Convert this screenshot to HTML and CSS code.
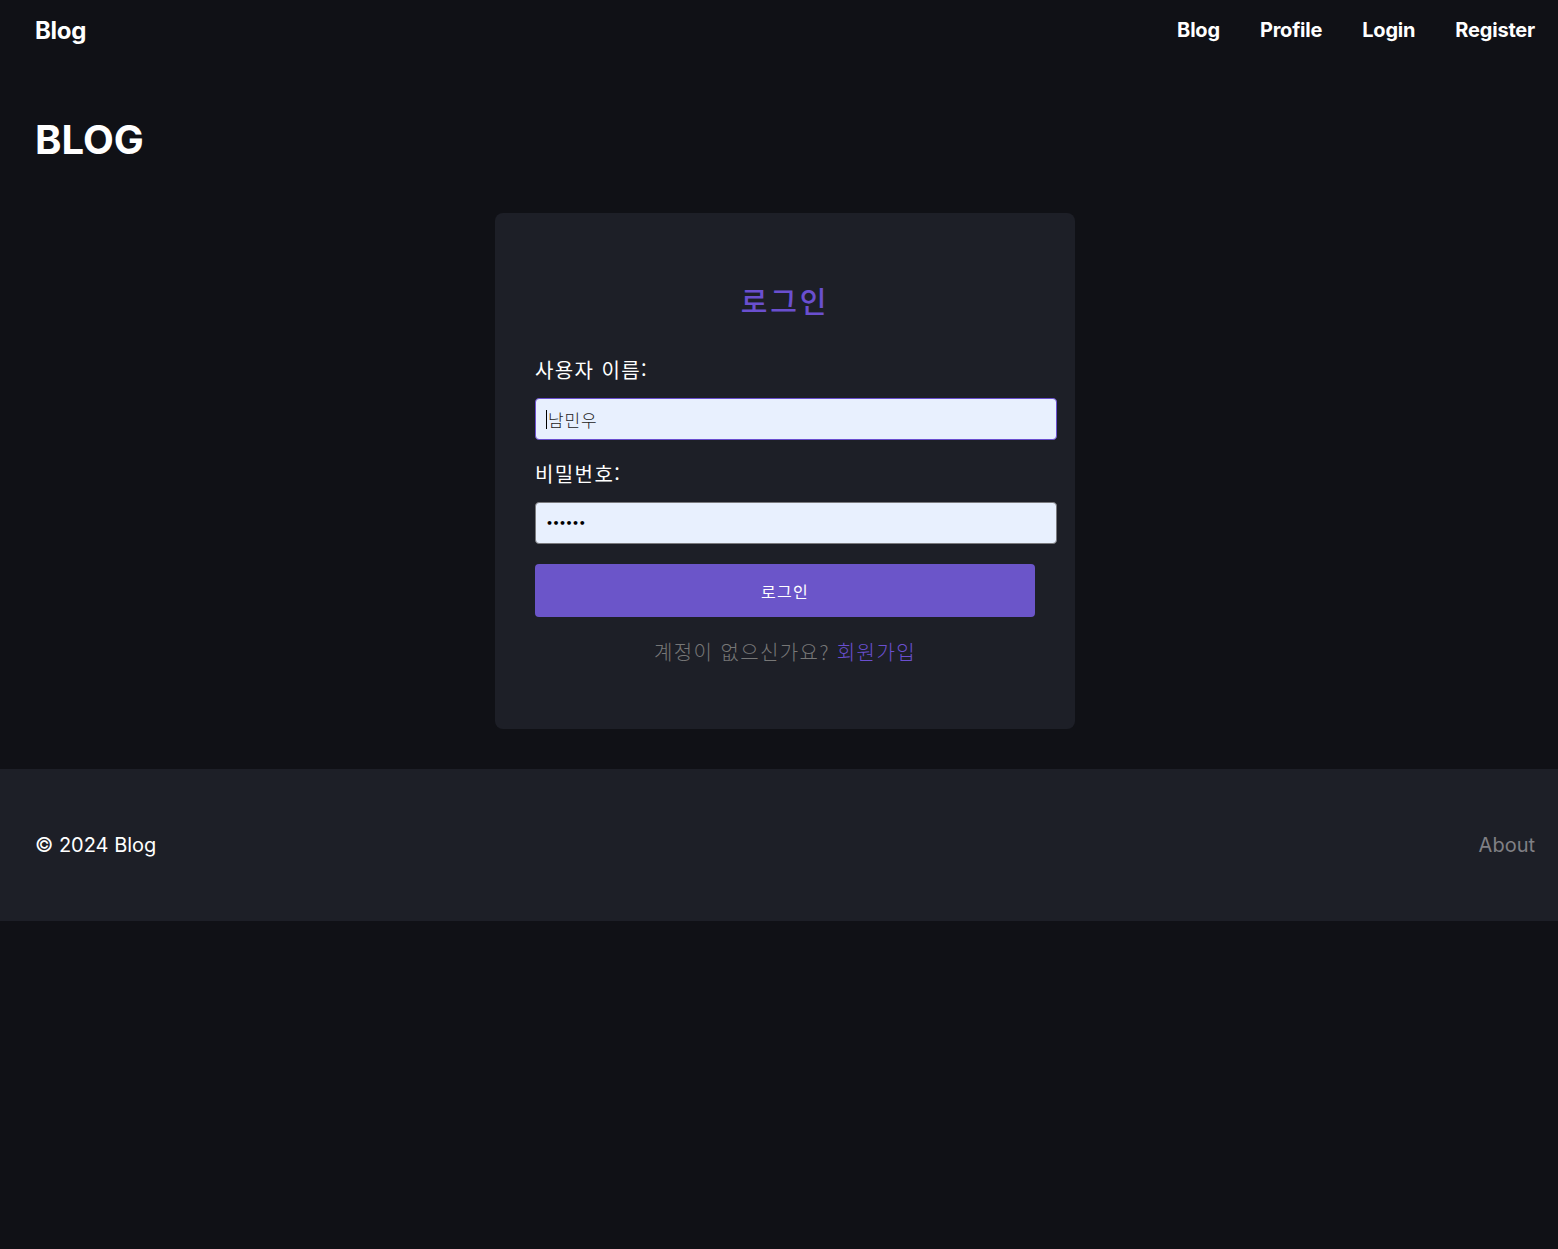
FILE: index.html
```html
<!DOCTYPE html>
<html lang="ko">
<head>
<meta charset="utf-8">
<title>Blog</title>
<link rel="stylesheet" href="styles.css">
</head>
<body>
<header class="topbar">
  <a class="brand" href="#">Blog</a>
  <nav class="nav">
    <a href="#">Blog</a>
    <a href="#">Profile</a>
    <a href="#">Login</a>
    <a href="#">Register</a>
  </nav>
</header>
<main class="main">
  <h1 class="page-title">BLOG</h1>
  <section class="card">
    <h2 class="card-title">로그인</h2>
    <form class="form">
      <label class="label" for="u">사용자 이름:</label>
      <div class="input input-focus" id="u"><span class="caret"></span>남민우</div>
      <label class="label" for="p">비밀번호:</label>
      <div class="input" id="p"><span class="dots">••••••</span></div>
      <div class="btn">로그인</div>
      <p class="signup">계정이 없으신가요? <a href="#">회원가입</a></p>
    </form>
  </section>
</main>
<footer class="footer">
  <span class="copy">© 2024 Blog</span>
  <a class="about" href="#">About</a>
</footer>
</body>
</html>
```
FILE: styles.css
```css
* { box-sizing: border-box; }
html, body { margin: 0; padding: 0; }
body {
  background: #101116;
  color: #fff;
  font-family: Inter, "Noto Sans CJK KR", sans-serif;
}
a { text-decoration: none; color: inherit; }

.topbar {
  height: 60px;
  padding: 0 23px 0 35px;
  display: flex;
  align-items: center;
  justify-content: space-between;
}
.brand { font-size: 24px; font-weight: 700; color: #fff; letter-spacing: -0.3px; }
.nav { display: flex; gap: 40px; }
.nav a { font-size: 20px; font-weight: 700; color: #fff; letter-spacing: -0.2px; }

.main { padding: 0 23px 40px 35px; }
.page-title {
  margin: 0;
  padding-top: 56px;
  font-size: 40px;
  line-height: 48px;
  font-weight: 700;
  color: #fff;
}
.card {
  width: 580px;
  margin: 49px auto 0;
  background: #1d1f27;
  border-radius: 8px;
  padding: 40px 40px 63px;
}
.card-title {
  margin: 27px 0 0;
  text-align: center;
  font-size: 29px;
  line-height: 40px;
  font-weight: 500;
  color: #6a4fcf;
  letter-spacing: 0.1em;
  font-family: "Noto Sans CJK KR", sans-serif;
}
.form { display: flex; flex-direction: column; margin-top: 36px; }
.label {
  font-family: "Noto Sans CJK KR", sans-serif;
  font-size: 20px;
  line-height: 28px;
  letter-spacing: 0.07em;
  color: #fff;
}
.input {
  width: 522px;
  height: 42px;
  margin: 14px 0 20px;
  background: #e8f0fe;
  border: 1px solid #7a7a7e;
  border-radius: 4px;
  padding: 0 10px;
  display: flex;
  align-items: center;
  color: #222;
  font-family: "Noto Sans CJK KR", sans-serif;
  font-weight: 300;
  font-size: 17px;
  letter-spacing: 0.05em;
}
.input-focus { border-color: #6a4fcf; }
.caret { width: 1px; height: 19px; background: #000; margin-right: 1px; }
.dots { color: #000; font-size: 11px; letter-spacing: -0.5px; font-family: "DejaVu Sans", sans-serif; font-weight: 700; }
.btn {
  width: 500px;
  height: 53px;
  background: #6b55c9;
  border-radius: 4px;
  color: #fff;
  display: flex;
  align-items: center;
  justify-content: center;
  font-family: "Noto Sans CJK KR", sans-serif;
  font-size: 16px;
  letter-spacing: 0.08em;
}
.signup {
  margin: 20px 0 0;
  padding-top: 1px;
  height: 29px;
  text-align: center;
  font-size: 20px;
  line-height: 28px;
  color: #777;
  letter-spacing: 0.07em;
  font-family: "Noto Sans CJK KR", sans-serif;
  font-weight: 300;
}
.signup a { color: #6a4fcf; }

.footer {
  height: 152px;
  background: #1d1f27;
  padding: 0 23px 0 35px;
  display: flex;
  align-items: center;
  justify-content: space-between;
}
.copy { font-size: 20px; color: #fff; }
.about { font-size: 20px; color: #808085; }
```
